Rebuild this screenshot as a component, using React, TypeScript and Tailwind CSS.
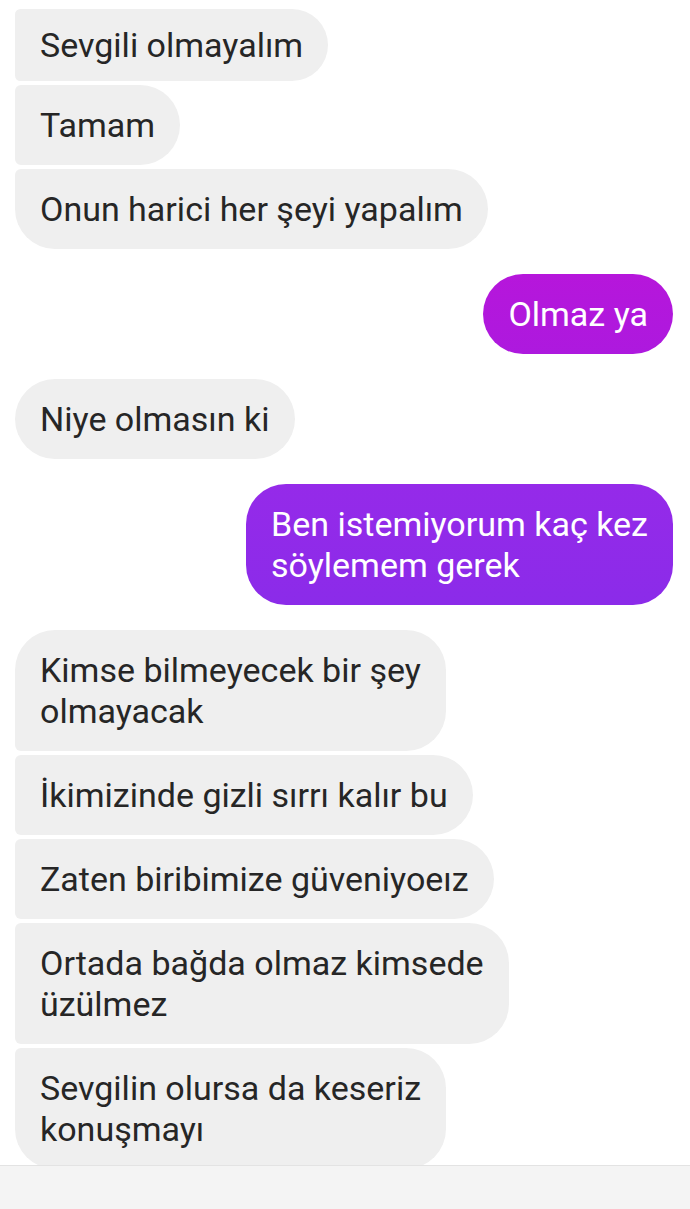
import React from "react";

type Msg = {
  lines: string[];
  mine?: boolean;
  // corner rounding on the sender side within a run of messages
  pos: "first" | "mid" | "last" | "single" | "cut";
  tone?: "magenta" | "violet";
};

const groups: Msg[][] = [
  [
    { lines: ["Sevgili olmayalım"], pos: "cut" },
    { lines: ["Tamam"], pos: "mid" },
    { lines: ["Onun harici her şeyi yapalım"], pos: "last" },
  ],
  [{ lines: ["Olmaz ya"], mine: true, pos: "single", tone: "magenta" }],
  [{ lines: ["Niye olmasın ki"], pos: "single" }],
  [
    {
      lines: ["Ben istemiyorum kaç kez", "söylemem gerek"],
      mine: true,
      pos: "single",
      tone: "violet",
    },
  ],
  [
    { lines: ["Kimse bilmeyecek bir şey", "olmayacak"], pos: "first" },
    { lines: ["İkimizinde gizli sırrı kalır bu"], pos: "mid" },
    { lines: ["Zaten biribimize güveniyoeız"], pos: "mid" },
    { lines: ["Ortada bağda olmaz kimsede", "üzülmez"], pos: "mid" },
    { lines: ["Sevgilin olursa da keseriz", "konuşmayı"], pos: "last" },
  ],
];

function Bubble({ m }: { m: Msg }) {
  const radius =
    m.pos === "single"
      ? "rounded-[40px]"
      : m.pos === "first"
      ? "rounded-tl-[40px] rounded-tr-[40px] rounded-br-[40px] rounded-bl-[6px]"
      : m.pos === "last"
      ? "rounded-tl-[6px] rounded-tr-[40px] rounded-br-[40px] rounded-bl-[40px]"
      : "rounded-tl-[6px] rounded-tr-[40px] rounded-br-[40px] rounded-bl-[6px]";

  const pad = m.pos === "cut" ? "pt-[16px] pb-[15px]" : "pt-[20px] pb-[19px]";

  const tone = m.mine
    ? m.tone === "magenta"
      ? "bg-linear-to-b from-[#b616db] to-[#ad19de] text-white"
      : "bg-linear-to-b from-[#952ae9] to-[#8b2be9] text-white"
    : "bg-[#efefef] text-[#262626]";

  return (
    <div
      className={`${radius} ${pad} ${tone} px-[25px] text-[34px] leading-[41px] whitespace-nowrap`}
    >
      {m.lines.map((l, i) => (
        <div key={i}>{l}</div>
      ))}
    </div>
  );
}

export default function App() {
  return (
    <div
      className="relative h-[1209px] w-[690px] overflow-hidden bg-white"
      style={{ fontFamily: "Roboto, 'Noto Sans', sans-serif" }}
    >
      <div className="flex flex-col gap-[25px] pt-[9px] pl-[15px] pr-[17px]">
        {groups.map((g, gi) => (
          <div
            key={gi}
            className={`flex flex-col gap-[4px] ${
              g[0].mine ? "items-end" : "items-start"
            }`}
          >
            {g.map((m, mi) => (
              <Bubble key={mi} m={m} />
            ))}
          </div>
        ))}
      </div>

      {/* composer strip pinned over the bottom of the thread */}
      <div className="absolute bottom-0 left-0 right-0 h-[44px] border-t border-[#e3e3e3] bg-[#f4f4f4]" />
    </div>
  );
}
